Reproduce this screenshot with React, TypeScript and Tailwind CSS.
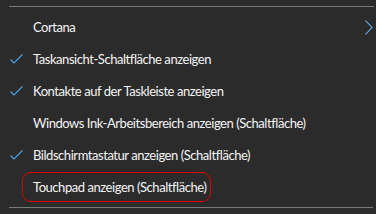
import React from 'react';

const items = [
  { label: 'Cortana', checked: false, submenu: true },
  { label: 'Taskansicht-Schaltfläche anzeigen', checked: true },
  { label: 'Kontakte auf der Taskleiste anzeigen', checked: true },
  { label: 'Windows Ink-Arbeitsbereich anzeigen (Schaltfläche)', checked: false },
  { label: 'Bildschirmtastatur anzeigen (Schaltfläche)', checked: true },
  { label: 'Touchpad anzeigen (Schaltfläche)', checked: false, highlight: true },
];

function Check() {
  return (
    <svg width="13" height="10" viewBox="0 0 13 10" fill="none">
      <path d="M0.5 5.5 L4 9 L12.5 0.5" stroke="#4fa3e6" strokeWidth="1.1" />
    </svg>
  );
}

function Chevron() {
  return (
    <svg width="8" height="15" viewBox="0 0 8 15" fill="none">
      <path d="M0.5 0.5 L7 7.5 L0.5 14.5" stroke="#6fb6f0" strokeWidth="1.1" />
    </svg>
  );
}

export default function App() {
  return (
    <div
      className="w-[376px] h-[214px] bg-[#2b2b2b] text-[#f4f4f4] overflow-hidden"
      style={{ fontFamily: 'Lato, "Noto Sans", sans-serif' }}
    >
      <div className="pt-[6px] pl-[9px] pr-[2px]">
        <div className="h-px bg-[#7a7a7a]" />
      </div>
      <div className="flex flex-col pt-[4px]">
        {items.map((it) => (
          <div key={it.label} className="h-[32px] flex items-center relative">
            <div className="w-[33px] pl-[10px] flex items-center">
              {it.checked && <Check />}
            </div>
            {it.highlight ? (
              <span className="relative text-[13px] leading-none tracking-[-0.45px]">
                {it.label}
                <span className="absolute left-[-11px] right-[-5px] top-[-9px] bottom-[-8px] border-[1.5px] border-[#e00000] rounded-[9px]" />
              </span>
            ) : (
              <span className="text-[13px] leading-none tracking-[-0.45px]">{it.label}</span>
            )}
            {it.submenu && (
              <div className="ml-auto pr-[3px] flex items-center">
                <Chevron />
              </div>
            )}
          </div>
        ))}
      </div>
      <div className="pt-[4px] pl-[9px] pr-[3px]">
        <div className="h-px bg-[#7a7a7a]" />
      </div>
    </div>
  );
}
